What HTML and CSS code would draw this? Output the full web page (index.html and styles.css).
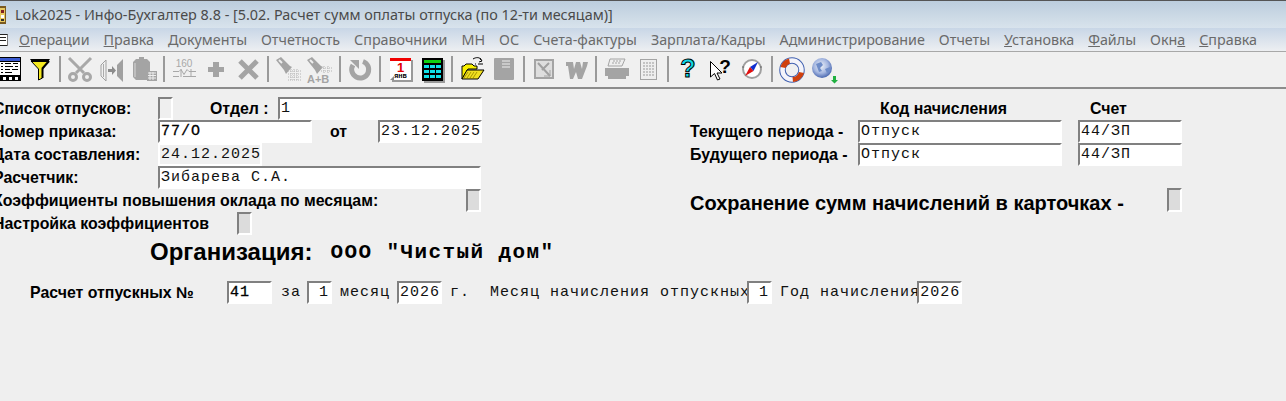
FILE: index.html
```html
<!DOCTYPE html>
<html lang="ru">
<head>
<meta charset="utf-8">
<title>Lok2025 - Инфо-Бухгалтер 8.8</title>
<link rel="stylesheet" href="styles.css">
</head>
<body>
<header class="titlebar">
  <svg class="app-icon" viewBox="0 0 6 18" width="6" height="18"><rect width="6" height="18" fill="#7a5a20"/><rect x="0" y="2" width="5" height="14" fill="#e8c860"/><rect x="1" y="4" width="3" height="3" fill="#802020"/><rect x="1" y="9" width="3" height="3" fill="#fff"/><rect x="1" y="13" width="3" height="2" fill="#303030"/></svg>
  <span class="title-text">Lok2025 - Инфо-Бухгалтер 8.8 - [5.02. Расчет сумм оплаты отпуска (по 12-ти месяцам)]</span>
</header>
<nav class="menubar">
  <svg class="doc-icon" viewBox="0 0 8 12" width="8" height="12"><rect width="8" height="12" fill="#fff"/><path d="M0 .5h7.5v11H0M0 3.5h6M0 6.5h6" stroke="#222" fill="none"/><rect x="7" y="1" width="1" height="11" fill="#777"/></svg>
  <a class="menu-item"><u>О</u>перации</a>
  <a class="menu-item"><u>П</u>равка</a>
  <a class="menu-item"><u>Д</u>окументы</a>
  <a class="menu-item">Отчетность</a>
  <a class="menu-item">Справочники</a>
  <a class="menu-item">МН</a>
  <a class="menu-item">ОС</a>
  <a class="menu-item">Счета-фактуры</a>
  <a class="menu-item">Зарплата/Кадры</a>
  <a class="menu-item">Администрирование</a>
  <a class="menu-item">Отчеты</a>
  <a class="menu-item"><u>У</u>становка</a>
  <a class="menu-item"><u>Ф</u>айлы</a>
  <a class="menu-item">Окн<u>а</u></a>
  <a class="menu-item"><u>С</u>правка</a>
</nav>
<div class="toolbar">
  <svg class="tool" viewBox="0 0 32 28"><rect x="0" y="1" width="29" height="24" fill="#000"/><rect x="1" y="2" width="27" height="3" fill="#3a5ad0"/><rect x="1" y="6" width="27" height="13" fill="#fff"/><path d="M9 7.500h2M13 7.500h6M21 7.500h5M9 10.500h2M13 10.500h8M23 10.500h3M9 13.500h2M13 13.500h5M20 13.500h6M9 16.500h2M13 16.500h7" stroke="#000"/><rect x="11" y="21" width="3" height="3" fill="#fff"/><rect x="17" y="21" width="3" height="3" fill="#fff"/><rect x="23" y="21" width="3" height="3" fill="#fff"/></svg>
  <svg class="tool" viewBox="0 0 32 28"><path d="M7 5h18L18.500 13V22L14.500 24V13Z" fill="#f4e820" stroke="#000"/><path d="M6 3h20l-2 3H8Z" fill="#000"/><path d="M18 13 25 5M18.500 13v9" stroke="#000" stroke-width="2"/></svg>
  <i class="sep"></i>
  <svg class="tool" viewBox="0 0 32 28"><g fill="none" stroke="#a8a8a8" stroke-width="3"><path d="M5 2 20 17M27 2 12 17"/><circle cx="9" cy="21" r="3.500"/><circle cx="23" cy="21" r="3.500"/></g></svg>
  <svg class="tool" viewBox="0 0 32 28"><path d="M5 9 10 4V25L5 20Z" fill="#f0f0f0" stroke="#a0a0a0"/><path d="M7.500 8v13" stroke="#aaa"/><path d="M21 9 27 3V26L21 20Z" fill="#a0a0a0"/><path d="M12 13h4V10l4 4.500-4 4.500V16h-4Z" fill="#8c8c8c"/></svg>
  <svg class="tool" viewBox="0 0 32 28"><path d="M5 6 8 3h3V1h5v2h3l3 3V24H8L5 21Z" fill="#a4a4a4"/><path d="M7 7v14" stroke="#d8d8d8"/><rect x="19" y="15" width="10" height="10" fill="#a4a4a4"/><path d="M20 17h8M20 19.500h8M20 22h8M22 16v8M25 16v8" stroke="#eee"/></svg>
  <i class="sep"></i>
  <svg class="tool" viewBox="0 0 32 28"><text class="small-num" x="16" y="11" text-anchor="middle">160</text><path d="M5 15.500h6l2-2 3 5 3-5 2 2h7M5 20.500h6M15 20.500h13M13 13v8M23 13v8" fill="none" stroke="#a8a8a8"/></svg>
  <svg class="tool" viewBox="0 0 32 28"><rect x="13" y="6" width="6" height="15" fill="#a4a4a4"/><rect x="8" y="11" width="16" height="5" fill="#a4a4a4"/></svg>
  <svg class="tool" viewBox="0 0 32 28"><path d="M8 5 25 22M25 5 8 22" stroke="#a4a4a4" stroke-width="5"/></svg>
  <i class="sep"></i>
  <svg class="tool" viewBox="0 0 32 28"><path d="M4 4 9 1l9 9 2 1-6 7-2-4Z" fill="#a4a4a4"/><path d="M7 4l3 3" stroke="#eee" stroke-width="2"/><path d="M16 15h13M16 18h13M16 21h13M16 24h13M19 13v12M22 13v12M25 13v12" stroke="#b4b4b4" stroke-dasharray="1 1"/></svg>
  <svg class="tool" viewBox="0 0 32 28"><path d="M3 4 8 1l9 9 2 1-6 7-2-4Z" fill="#a4a4a4"/><path d="M6 4l3 3" stroke="#eee" stroke-width="2"/><path d="M17 12h12M17 15h12M20 10v7M24 10v7" stroke="#b4b4b4" stroke-dasharray="1 1"/><text class="ab-label" x="3" y="27">A+B</text></svg>
  <i class="sep"></i>
  <svg class="tool" viewBox="0 0 32 28"><path d="M19 5.500A8.500 8.500 0 1 1 9 9" fill="none" stroke="#a4a4a4" stroke-width="5"/><path d="M6 4h9v9Z" fill="#a4a4a4"/></svg>
  <i class="sep"></i>
  <svg class="tool" viewBox="0 0 32 28"><rect x="8" y="4" width="21" height="22" fill="#999"/><rect x="6" y="2" width="21" height="22" fill="#fff"/><rect x="6" y="2" width="21" height="3" fill="#f00000"/><text class="cal-day" x="16.500" y="16" text-anchor="middle">1</text><text class="cal-mon" x="16.500" y="22" text-anchor="middle">янв</text><path d="M6 24l4-4v4Z" fill="#888"/></svg>
  <svg class="tool" viewBox="0 0 32 28"><rect x="8" y="4" width="21" height="23" fill="#9a9a9a"/><rect x="6" y="2" width="21" height="23" fill="#000"/><rect x="8" y="4" width="17" height="3" fill="#10d010"/><g fill="#10e0e8"><rect x="8" y="9" width="5" height="3"/><rect x="14" y="9" width="5" height="3"/><rect x="20" y="9" width="5" height="3"/><rect x="8" y="14" width="5" height="3"/><rect x="14" y="14" width="5" height="3"/><rect x="20" y="14" width="5" height="3"/><rect x="8" y="19" width="5" height="3"/><rect x="14" y="19" width="5" height="3"/><rect x="20" y="19" width="5" height="3"/></g></svg>
  <i class="sep"></i>
  <svg class="tool" viewBox="0 0 32 28"><path d="M6 23V10h2l2-2h6l2 2h3v3H12L6 23Z" fill="#f8f000" stroke="#000"/><path d="M6 23 11 14h17l-6 9Z" fill="#f0e020" stroke="#000"/><path d="M8 22l4-6M11 22l4-6M14 22l4-6M17 22l4-6" stroke="#a89800"/><path d="M17 3c3-2 7-2 8 1M24 2l2 3-3 1M19 8h1M22 8h5" fill="none" stroke="#000"/></svg>
  <svg class="tool" viewBox="0 0 32 28"><rect x="6" y="2" width="20" height="22" rx="1" fill="#a4a4a4"/><path d="M14 5h8M14 8h8M14 11h8" stroke="#eee"/></svg>
  <i class="sep"></i>
  <svg class="tool" viewBox="0 0 32 28"><rect x="6" y="3" width="20" height="20" fill="#a4a4a4"/><rect x="8" y="5" width="16" height="16" fill="#dedede"/><path d="M10 7 22 20M21 7 14 14" stroke="#a0a0a0" stroke-width="2"/><path d="M16 20h6v-6" stroke="#a4a4a4" fill="none"/></svg>
  <svg class="tool" viewBox="0 0 32 28"><path d="M6 6h7l1 7 2-7h4l2 7 1-7h5l-1 4-5 13h-4l-2-7-3 7h-3L8 10H6Z" fill="#a4a4a4"/></svg>
  <i class="sep"></i>
  <svg class="tool" viewBox="0 0 32 28"><path d="M10 3h15l-3 7H8Z" fill="#eee" stroke="#a4a4a4"/><path d="M13 5h8M12 7h8" stroke="#a4a4a4" stroke-dasharray="2 1"/><path d="M5 12h24v8H26v3H8v-3H5Z" fill="#a4a4a4"/></svg>
  <svg class="tool" viewBox="0 0 32 28"><rect x="8.500" y="3.500" width="16" height="20" fill="#eee" stroke="#a4a4a4"/><path d="M11 7h11M11 10h11M11 13h11M11 16h11M11 19h11" stroke="#999" stroke-dasharray="2 1"/></svg>
  <i class="sep"></i>
  <svg class="tool" viewBox="0 0 32 28"><text class="help-q" x="16" y="21" text-anchor="middle">?</text></svg>
  <svg class="tool" viewBox="0 0 32 28"><path d="M6.500 5.500V21l4-3.500 3 6.500 2.500-1-3-6h5Z" fill="#fff" stroke="#000"/><text class="help-q2" x="21" y="17" text-anchor="middle">?</text></svg>
  <svg class="tool" viewBox="0 0 32 28"><circle cx="16" cy="13" r="9" fill="#fff" stroke="#a0a0a0" stroke-width="2"/><path d="M22 6 17.500 15 14 11Z" fill="#1030d0"/><path d="M9 20l8.500-5L14 11Z" fill="#e01010"/><path d="M6 11h2M24 11h2" stroke="#606060"/></svg>
  <i class="sep"></i>
  <svg class="tool" viewBox="0 0 32 28"><circle cx="16" cy="14" r="9.500" fill="none" stroke="#4060b0" stroke-width="6.500"/><circle cx="16" cy="14" r="9.500" fill="none" stroke="#f4f4fa" stroke-width="4.500"/><path d="M4.500 11A12 12 0 0 1 13 2.500l1 5a7 7 0 0 0-4.500 4.500ZM28 17A12 12 0 0 1 17 26l-.5-5a7 7 0 0 0 6.500-5Z" fill="#d0400c"/></svg>
  <svg class="tool" viewBox="0 0 32 28"><defs><radialGradient id="globe" cx=".45" cy=".4" r=".6"><stop offset="0" stop-color="#eef2f8"/><stop offset=".6" stop-color="#a4b6e0"/><stop offset="1" stop-color="#4a68b0"/></radialGradient></defs><circle cx="14" cy="12" r="10" fill="url(#globe)"/><path d="M8 8l5-2 2 3-3 3 2 3-3 1ZM17 13l5-2v4l-3 2Z" fill="#6e8cc8"/><path d="M25 20h3v4h2l-3.500 3.500L23 24h2Z" fill="#20b040"/></svg>
</div>
<main class="form">
  <div class="top-area">
    <section class="left-col">
      <div class="row">
        <span class="label col-label">Список отпусков:</span>
        <span class="field check plain"></span>
        <span class="label dept-label">Отдел :</span>
        <span class="field mono dept-field">1</span>
      </div>
      <div class="row">
        <span class="label col-label">Номер приказа:</span>
        <span class="field mono bold-ish order-field">77/О</span>
        <span class="label from-label">от</span>
        <span class="field mono date-field">23.12.2025</span>
      </div>
      <div class="row">
        <span class="label col-label">Дата составления:</span>
        <span class="field flat mono made-field">24.12.2025</span>
      </div>
      <div class="row">
        <span class="label col-label">Расчетчик:</span>
        <span class="field mono person-field">Зибарева С.А.</span>
      </div>
      <div class="row spread">
        <span class="label">Коэффициенты повышения оклада по месяцам:</span>
        <span class="field check"></span>
      </div>
      <div class="row">
        <span class="label tune-label">Настройка коэффициентов</span>
        <span class="field check"></span>
      </div>
    </section>
    <section class="right-col">
      <div class="charge-grid">
        <span></span>
        <span class="label head-a">Код начисления</span>
        <span class="label head-b">Счет</span>
        <span class="label">Текущего периода -</span>
        <span class="field mono">Отпуск</span>
        <span class="field mono acc">44/ЗП</span>
        <span class="label">Будущего периода -</span>
        <span class="field mono">Отпуск</span>
        <span class="field mono acc">44/ЗП</span>
      </div>
      <div class="save-row">
        <span class="label save-label">Сохранение сумм начислений в карточках -</span>
        <span class="field check"></span>
      </div>
    </section>
  </div>
  <div class="org-row">
    <span class="org-label">Организация:</span>
    <span class="org-name">ООО "Чистый дом"</span>
  </div>
  <div class="calc-row">
    <span class="label calc-label">Расчет отпускных №</span>
    <span class="field mono bold-ish f45">41</span>
    <span class="mono txt t-za">за</span>
    <span class="field mono f25 right">1</span>
    <span class="mono txt t-mes">месяц</span>
    <span class="field mono f45">2026</span>
    <span class="mono txt t-g">г.</span>
    <span class="mono txt t-long">Месяц начисления отпускных</span>
    <span class="field mono f25 right overlap">1</span>
    <span class="mono txt t-god">Год начисления</span>
    <span class="field mono f45 overlap">2026</span>
  </div>
</main>
</body>
</html>
```
FILE: styles.css
```css
* { box-sizing: border-box; }
html, body { margin: 0; height: 401px; overflow: hidden; }
body { background: #efefef; color: #000; font-family: "Liberation Sans", Arial, sans-serif; }
.titlebar {
  height: 28px; display: flex; align-items: center; gap: 9px;
  border-top: 1px solid #555;
  background: linear-gradient(#bccddd, #d8e3ec);
}
.app-icon { flex: none; }
.title-text { font: 14.4px "Noto Sans", sans-serif; color: #4a4a4a; white-space: nowrap; }
.menubar {
  height: 24px; display: flex; align-items: center;
  background: linear-gradient(#c8d6e6, #edeff2);
  border-bottom: 1px solid #a8a8a8;
}
.doc-icon { flex: none; margin-right: 4px; }
.menu-item { padding: 0 7px; font: 14.3px "Noto Sans", sans-serif; color: #6a6a6a; white-space: nowrap; }
.toolbar {
  height: 37px; display: flex; margin-left: -8px; padding-top: 4px;
  border-bottom: 2px solid #8c8c8c;
  background: #f0f0f0;
}
.tool { flex: none; width: 32px; height: 28px; display: block; }
.sep { flex: none; width: 8px; height: 26px; }
.sep::before { content: ""; display: block; width: 2px; height: 26px; margin-left: 3px; background: #9a9a9a; }
.small-num { font: 10px "Liberation Sans", sans-serif; fill: #a8a8a8; }
.ab-label { font: bold 11px "Liberation Sans", sans-serif; fill: #a4a4a4; }
.cal-day { font: bold 13px "Liberation Sans", sans-serif; fill: #e00000; }
.cal-mon { font: bold 7px "Liberation Sans", sans-serif; fill: #000; }
.help-q { font: bold 25px "Liberation Sans", sans-serif; fill: #10d8e8; stroke: #000; stroke-width: 1; }
.help-q2 { font: bold 19px "Liberation Sans", sans-serif; fill: #000; }
.form { padding-top: 8px; }
.top-area { display: flex; }
.left-col { flex: none; width: 488px; margin-left: -7px; margin-right: 209px; }
.row { height: 23px; display: flex; align-items: center; }
.spread { justify-content: space-between; }
.label { font-weight: bold; font-size: 15.9px; white-space: nowrap; color: #000; }
.col-label { width: 165px; flex: none; }
.field {
  height: 23px; flex: none; display: flex; align-items: center; padding: 0 0 0 1px;
  background: #fff; overflow: hidden; white-space: pre;
  border: 2px solid; border-color: #808080 #fff #fff #808080;
}
.mono { font-family: "Liberation Mono", monospace; font-size: 15px; letter-spacing: 1px; color: #111; }
.bold-ish { color: #000; -webkit-text-stroke: .3px #000; }
.check { width: 15px; background: #dcdcdc; }
.plain { background: #efefef; }
.dept-label { margin-left: 37px; width: 68px; flex: none; }
.dept-field { width: 204px; }
.order-field { width: 154px; }
.from-label { margin-left: 18px; width: 48px; flex: none; }
.date-field { width: 104px; }
.flat { border-color: #fff; background: #f0f0f0; }
.made-field { width: 104px; }
.person-field { width: 323px; }
.tune-label { width: 244px; flex: none; }
.right-col { flex: none; width: 492px; }
.charge-grid { display: grid; grid-template-columns: 168px 204px 120px; grid-auto-rows: 23px; align-items: center; }
.acc { margin-left: 16px; width: 104px; }
.head-a { margin-left: 22px; }
.head-b { margin-left: 28px; }
.save-row { display: flex; justify-content: space-between; align-items: center; margin-top: 22px; height: 24px; }
.save-label { font-size: 20px; padding-top: 6px; }
.save-row .check { height: 24px; }
.org-row { display: flex; align-items: center; height: 32px; margin-top: 1px; padding-left: 150px; gap: 18px; }
.org-label { font-weight: bold; font-size: 24px; }
.org-name { font: bold 21px "Liberation Mono", monospace; letter-spacing: 1.4px; white-space: pre; }
.calc-row { display: flex; align-items: center; height: 23px; margin-top: 13px; padding-left: 30px; }
.calc-label { width: 197px; flex: none; }
.txt { white-space: pre; flex: none; }
.f45 { width: 45px; }
.f25 { width: 25px; }
.right { justify-content: flex-end; padding-right: 1px; }
.t-za { margin: 0 6px 0 9px; }
.t-mes { margin: 0 7px 0 8px; }
.t-g { margin: 0 20px 0 8px; }
.overlap { margin-left: -3px; position: relative; }
.t-god { margin-left: 8px; }
```
